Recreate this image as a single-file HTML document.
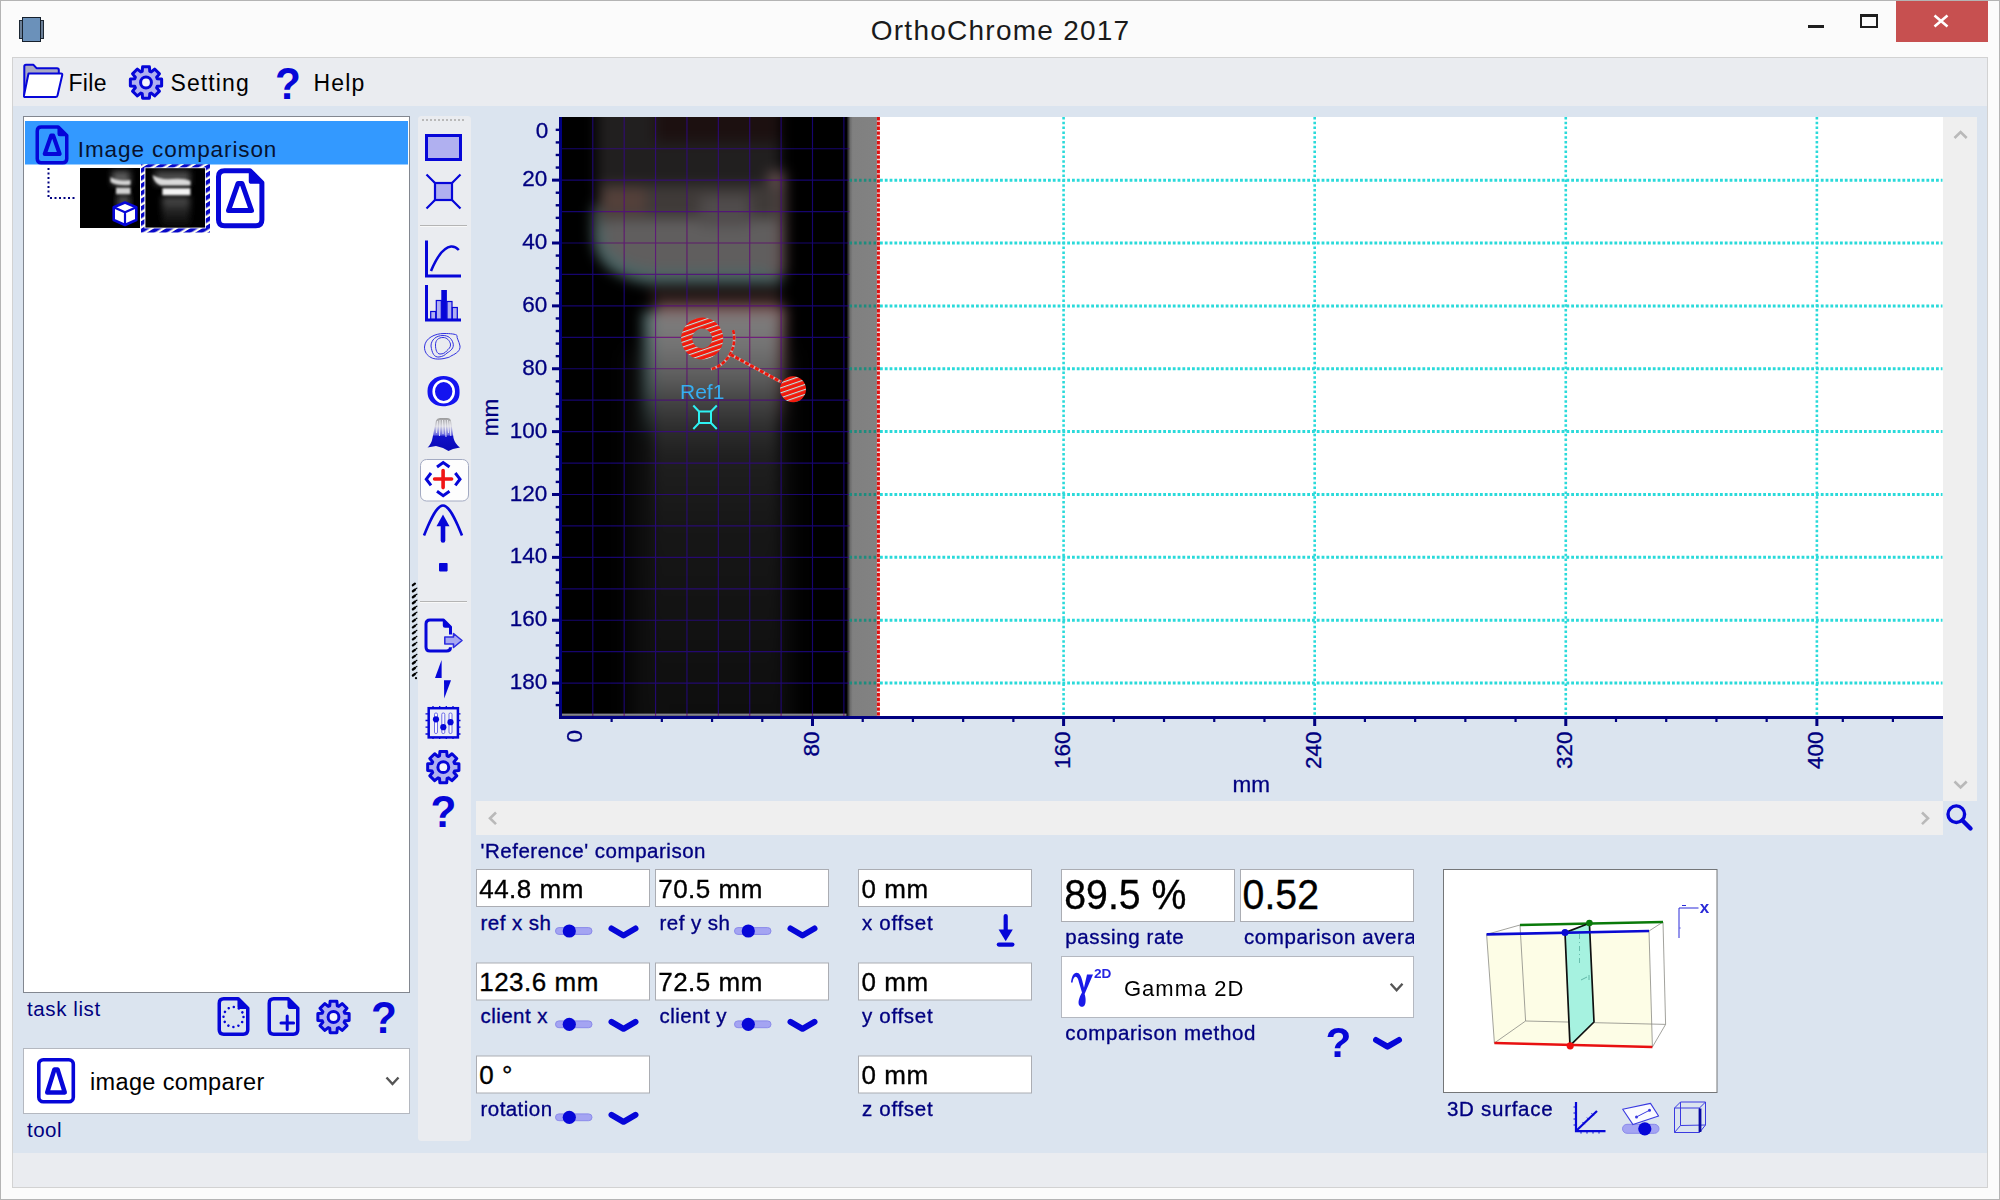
<!DOCTYPE html>
<html><head><meta charset="utf-8"><title>OrthoChrome 2017</title>
<style>
html,body{margin:0;padding:0;background:#fbfbfb;overflow:hidden;}
body{width:2000px;height:1200px;font-family:"Liberation Sans",sans-serif;}
svg{display:block;}
text{font-family:"Liberation Sans",sans-serif;}
</style></head>
<body>
<svg width="2000" height="1200" viewBox="0 0 2000 1200">
<rect x="0" y="0" width="2000" height="1200" fill="#fbfbfb"/>
<rect x="0.5" y="0.5" width="1999" height="1199" fill="none" stroke="#b4b4b4" stroke-width="1"/>
<rect x="19.5" y="20.5" width="24" height="18" fill="#6a7f98" stroke="#1c2733" stroke-width="1"/>
<rect x="22.5" y="17.5" width="18" height="24" fill="#6b91ba" stroke="#16202c" stroke-width="1"/>
<text x="1000.6" y="40.2" font-family="'Liberation Sans', sans-serif" font-size="28" fill="#1a1a1a" text-anchor="middle" letter-spacing="1.25">OrthoChrome 2017</text>
<rect x="1808" y="25" width="16" height="3" fill="#1e1e1e"/>
<rect x="1861" y="15" width="16" height="12" fill="none" stroke="#1e1e1e" stroke-width="2"/>
<rect x="1860" y="14" width="18" height="3" fill="#1e1e1e"/>
<rect x="1896" y="1" width="92" height="41" fill="#c75050"/>
<path d="M1934.5,15.5 L1947.5,26.5 M1947.5,15.5 L1934.5,26.5" stroke="#fff" stroke-width="2.6" fill="none"/>
<rect x="12.5" y="57.5" width="1975" height="1130" fill="#dbe4ef" stroke="#d2d2d2" stroke-width="1"/>
<rect x="13" y="58" width="1974" height="48" fill="#eaecf0"/>
<rect x="13" y="1153" width="1974" height="34" fill="#eaecf0"/>
<path d="M24.3,96 L24.3,66.5 Q24.3,64.8 26,64.8 L33.5,64.8 L36.5,68.2 L57,68.2 Q58.8,68.2 58.8,70 L58.8,74" fill="#a9a9c4" stroke="#0606d8" stroke-width="2" stroke-linejoin="round"/>
<path d="M28.5,73.5 L61,73.5 Q62.6,73.5 62.2,75.2 L57.5,95.5 Q57.1,97 55.5,97 L25.2,97 Q23.6,97 24,95.3 Z" fill="#fff" stroke="#0606d8" stroke-width="2" stroke-linejoin="round"/>
<text x="68.5" y="91.3" font-family="'Liberation Sans', sans-serif" font-size="23" fill="#000" letter-spacing="0.3">File</text>
<path d="M142.22,71.28 L142.59,66.87 L149.41,66.87 L149.78,71.28 L151.26,71.89 L154.64,69.03 L159.47,73.86 L156.61,77.24 L157.22,78.72 L161.63,79.09 L161.63,85.91 L157.22,86.28 L156.61,87.76 L159.47,91.14 L154.64,95.97 L151.26,93.11 L149.78,93.72 L149.41,98.13 L142.59,98.13 L142.22,93.72 L140.74,93.11 L137.36,95.97 L132.53,91.14 L135.39,87.76 L134.78,86.28 L130.37,85.91 L130.37,79.09 L134.78,78.72 L135.39,77.24 L132.53,73.86 L137.36,69.03 L140.74,71.89Z" fill="#b0b0f0" stroke="#0606d8" stroke-width="3" stroke-linejoin="round"/><circle cx="146" cy="82.5" r="5.42" fill="#f4f4fb" stroke="#0606d8" stroke-width="3"/>
<text x="170.5" y="91.3" font-family="'Liberation Sans', sans-serif" font-size="23" fill="#000" letter-spacing="1.1">Setting</text>
<text transform="translate(288,98.50) scale(0.944,1)" x="0" y="0" font-family="'Liberation Sans', sans-serif" font-weight="bold" font-size="44.79" fill="#0606d8" text-anchor="middle">?</text>
<text x="313.5" y="91.3" font-family="'Liberation Sans', sans-serif" font-size="23" fill="#000" letter-spacing="1.2">Help</text>
<rect x="23.5" y="116.5" width="386" height="876" fill="#fff" stroke="#828790" stroke-width="1"/>
<rect x="25" y="121" width="383" height="43.5" fill="#3399ff"/>
<path d="M41.25,127.05 L58.25,127.05 L66.75,135.55 L66.75,158.75 Q66.75,162.75 62.75,162.75 L41.25,162.75 Q37.25,162.75 37.25,158.75 L37.25,131.05 Q37.25,127.05 41.25,127.05Z" fill="none" stroke="#0606d8" stroke-width="3.5" stroke-linejoin="round"/><path d="M58.25,127.05 L58.25,134.05 Q58.25,135.55 59.75,135.55 L66.75,135.55Z" fill="#0606d8" stroke="#0606d8" stroke-width="1.57" stroke-linejoin="round"/>
<path d="M51.2,135.5 L53.2,135.5 L59.7,154 L44.7,154Z" fill="none" stroke="#0606d8" stroke-width="4" stroke-linejoin="round"/>
<text x="77.8" y="156.8" font-family="'Liberation Sans', sans-serif" font-size="22.5" fill="#061230" letter-spacing="0.9">Image comparison</text>
<path d="M48.5,168 L48.5,198 L77,198" fill="none" stroke="#000080" stroke-width="2" stroke-dasharray="2 2.5"/>
<defs><filter id="tb1" x="-30%" y="-30%" width="160%" height="160%"><feGaussianBlur stdDeviation="1.2"/></filter><filter id="tb2" x="-30%" y="-30%" width="160%" height="160%"><feGaussianBlur stdDeviation="3.2"/></filter><clipPath id="th1"><rect x="80" y="168" width="60" height="60"/></clipPath><clipPath id="th2"><rect x="145" y="168" width="60" height="60"/></clipPath><linearGradient id="fadeD" x1="0" y1="0" x2="0" y2="1"><stop offset="0" stop-color="#8a8a8a"/><stop offset="0.45" stop-color="#3a3a3a"/><stop offset="1" stop-color="#0a0a0a"/></linearGradient><pattern id="hatch" width="6.4" height="6.4" patternUnits="userSpaceOnUse" patternTransform="rotate(58)"><rect width="6.4" height="6.4" fill="#fffff0"/><rect width="4.1" height="6.4" fill="#0808c8"/></pattern></defs>
<rect x="80" y="168" width="60" height="60" fill="#000"/>
<g clip-path="url(#th1)"><rect x="112" y="171" width="18" height="14" fill="#5a5a5a" filter="url(#tb2)"/><rect x="117" y="195" width="13" height="16" fill="#4a4a4a" filter="url(#tb2)"/><path d="M110.5,177 Q117,181.5 130.5,180 L130.5,185 Q117,186 110.5,182Z" fill="#d4d4d4" filter="url(#tb1)"/><rect x="116" y="187.6" width="14.5" height="6.6" fill="#d0d0d0" filter="url(#tb1)"/></g>
<path d="M125,202.5 L136.3,207.3 L136.3,220 L125,225 L113.7,220 L113.7,207.3Z" fill="#fff" stroke="#0606d8" stroke-width="2.6" stroke-linejoin="round"/>
<path d="M113.7,207.3 L125,212.3 L136.3,207.3 M125,212.3 L125,225" fill="none" stroke="#0606d8" stroke-width="2.2"/>
<rect x="141" y="164.3" width="69" height="68.2" fill="url(#hatch)"/>
<rect x="144.4" y="167.4" width="61.4" height="61" fill="#fff"/>
<rect x="145.4" y="168.2" width="59.6" height="59.4" fill="#000"/>
<g clip-path="url(#th2)"><rect x="155" y="171" width="35" height="14" fill="#4c4c4c" filter="url(#tb2)"/><rect x="162" y="197" width="28" height="30" fill="url(#fadeD)" opacity="0.6" filter="url(#tb2)"/><path d="M152.5,175 Q160,180 172,179 Q184,178 190.5,181 L190.5,185.6 L161,185.6 Q154,183 152.5,175Z" fill="#dadada" filter="url(#tb1)"/><rect x="162.4" y="188.2" width="28" height="7" fill="#f4f4f4" filter="url(#tb1)"/></g>
<path d="M224.5,170.7 L249.89999999999998,170.7 L261.9,182.7 L261.9,219.7 Q261.9,225.7 255.89999999999998,225.7 L224.5,225.7 Q218.5,225.7 218.5,219.7 L218.5,176.7 Q218.5,170.7 224.5,170.7Z" fill="#fff" stroke="#0606d8" stroke-width="5" stroke-linejoin="round"/><path d="M249.89999999999998,170.7 L249.89999999999998,181.2 Q249.89999999999998,182.7 251.39999999999998,182.7 L261.9,182.7Z" fill="#0606d8" stroke="#0606d8" stroke-width="2.25" stroke-linejoin="round"/>
<path d="M238,183.5 L242,183.5 L251.5,210.5 L228.5,210.5Z" fill="none" stroke="#0606d8" stroke-width="5" stroke-linejoin="round"/>
<text x="27" y="1015.6" font-family="'Liberation Sans', sans-serif" font-size="20.5" fill="#000080" letter-spacing="0.6">task list</text>
<path d="M223.75,998.75 L238.25,998.75 L247.75,1008.25 L247.75,1029.75 Q247.75,1034.25 243.25,1034.25 L223.75,1034.25 Q219.25,1034.25 219.25,1029.75 L219.25,1003.25 Q219.25,998.75 223.75,998.75Z" fill="none" stroke="#0606d8" stroke-width="3.5" stroke-linejoin="round"/><path d="M238.25,998.75 L238.25,1006.75 Q238.25,1008.25 239.75,1008.25 L247.75,1008.25Z" fill="#0606d8" stroke="#0606d8" stroke-width="1.57" stroke-linejoin="round"/>
<circle cx="233.5" cy="1017" r="10" fill="none" stroke="#0606d8" stroke-width="2.5" stroke-dasharray="0.01 5.226" stroke-linecap="round"/>
<path d="M273.75,998.75 L288.25,998.75 L297.75,1008.25 L297.75,1029.75 Q297.75,1034.25 293.25,1034.25 L273.75,1034.25 Q269.25,1034.25 269.25,1029.75 L269.25,1003.25 Q269.25,998.75 273.75,998.75Z" fill="none" stroke="#0606d8" stroke-width="3.5" stroke-linejoin="round"/><path d="M288.25,998.75 L288.25,1006.75 Q288.25,1008.25 289.75,1008.25 L297.75,1008.25Z" fill="#0606d8" stroke="#0606d8" stroke-width="1.57" stroke-linejoin="round"/>
<path d="M281,1023 L293.6,1023 M287.2,1016 L287.2,1029.6" stroke="#0606d8" stroke-width="3" fill="none" stroke-linecap="round"/>
<path d="M329.72,1005.78 L330.09,1001.37 L336.91,1001.37 L337.28,1005.78 L338.76,1006.39 L342.14,1003.53 L346.97,1008.36 L344.11,1011.74 L344.72,1013.22 L349.13,1013.59 L349.13,1020.41 L344.72,1020.78 L344.11,1022.26 L346.97,1025.64 L342.14,1030.47 L338.76,1027.61 L337.28,1028.22 L336.91,1032.63 L330.09,1032.63 L329.72,1028.22 L328.24,1027.61 L324.86,1030.47 L320.03,1025.64 L322.89,1022.26 L322.28,1020.78 L317.87,1020.41 L317.87,1013.59 L322.28,1013.22 L322.89,1011.74 L320.03,1008.36 L324.86,1003.53 L328.24,1006.39Z" fill="#b0b0f0" stroke="#0606d8" stroke-width="3" stroke-linejoin="round"/><circle cx="333.5" cy="1017" r="5.42" fill="#f4f4fb" stroke="#0606d8" stroke-width="3"/>
<text transform="translate(384,1032.50) scale(0.944,1)" x="0" y="0" font-family="'Liberation Sans', sans-serif" font-weight="bold" font-size="44.79" fill="#0606d8" text-anchor="middle">?</text>
<rect x="23.5" y="1048.5" width="386" height="65" fill="#fff" stroke="#b4b8c0" stroke-width="1"/>
<rect x="38.8" y="1059.8" width="34.5" height="42" rx="4.5" fill="#fff" stroke="#0606d8" stroke-width="3.6"/>
<path d="M54.4,1069.5 L57.6,1069.5 L64.8,1092.5 L47.2,1092.5Z" fill="none" stroke="#0606d8" stroke-width="4.4" stroke-linejoin="round"/>
<text x="90" y="1090" font-family="'Liberation Sans', sans-serif" font-size="23.5" fill="#000" letter-spacing="0.35">image comparer</text>
<path d="M387,1106 m0,0" />
<path d="M386.5,1077.5 L392.5,1084 L398.5,1077.5" fill="none" stroke="#555" stroke-width="2.4"/>
<text x="27" y="1137" font-family="'Liberation Sans', sans-serif" font-size="20.5" fill="#000080" letter-spacing="0.5">tool</text>
<rect x="418" y="116" width="53" height="1025" rx="3.5" fill="#eaecf0"/>
<path d="M422,120 L465,120" stroke="#b9b9b9" stroke-width="2" stroke-dasharray="2 2" fill="none"/>
<rect x="426.5" y="135.5" width="34" height="24" fill="#b0b0f0" stroke="#0606d8" stroke-width="3"/>
<path d="M426.5,174.5 L435,183 M460.5,174.5 L452,183 M426.5,208.5 L435,200 M460.5,208.5 L452,200" stroke="#0606d8" stroke-width="2.2" fill="none"/>
<rect x="435" y="183" width="17" height="17" fill="#b0b0f0" stroke="#0606d8" stroke-width="2.2"/>
<path d="M420,225.5 L467,225.5" stroke="#b4b4b4" stroke-width="1"/>
<path d="M420,226.5 L467,226.5" stroke="#f8f8f8" stroke-width="1"/>
<path d="M426.5,240.5 L426.5,276 L461,276" fill="none" stroke="#0606d8" stroke-width="3"/>
<path d="M431,271 C436,259 443,247.5 451,246.5 C454.5,246.2 457,248 458.8,250" fill="none" stroke="#0606d8" stroke-width="2.5"/>
<rect x="430.7" y="311.5" width="5" height="8" fill="#b0b0f0" stroke="#0606d8" stroke-width="1.2"/>
<rect x="436.3" y="300.5" width="5" height="19" fill="#b0b0f0" stroke="#0606d8" stroke-width="1.2"/>
<rect x="441.3" y="290" width="5.6" height="30" fill="#0606d8"/>
<rect x="447" y="301.5" width="5" height="18" fill="#b0b0f0" stroke="#0606d8" stroke-width="1.2"/>
<rect x="452.3" y="307.5" width="5" height="12" fill="#b0b0f0" stroke="#0606d8" stroke-width="1.2"/>
<path d="M426.5,285 L426.5,320 L461,320" fill="none" stroke="#0606d8" stroke-width="3"/>
<path d="M424.5,347 C425,338 435,333.5 444,333.5 C450,333.5 456,334 457,335.5 C456.5,338 459,341 460,346 C460.5,351 456,353.5 452,355.5 C450,356.5 449.5,357.5 446,358 C441,359.5 434,359.5 431,357.5 C427,355.5 424.5,352 424.5,347Z" fill="none" stroke="#3030e0" stroke-width="1"/>
<path d="M431,346 C431,340 436,335.5 443,335.5 C448,335.5 451.5,338 453,343 C454.5,348 450.5,351 447,353 C445,355 443,356.5 439,357 C434,357.5 432,353 431,346Z" fill="none" stroke="#3030e0" stroke-width="1"/>
<path d="M435.5,345 C435.5,340 438.5,337.5 443,337.5 C447,337.5 449.5,340.5 450.5,344 C451,347.5 448.5,349 446.5,351 C445,353 443,354 440,354 C437,354 435.5,350 435.5,345Z" fill="none" stroke="#3030e0" stroke-width="1"/>
<path d="M427.5,391 C427.5,382 435,376 443.5,376 C452,376 459.5,381 459.5,390 C460,398 458,402 452,404.5 C446,407 438,407 433.5,403.5 C429,400 427.5,397 427.5,391Z" fill="#1414f0"/>
<ellipse cx="443.7" cy="391.5" rx="10" ry="10.8" fill="none" stroke="#fff" stroke-width="2.6"/>
<defs><linearGradient id="pk" x1="0" y1="0" x2="0" y2="1"><stop offset="0" stop-color="#9a9a9a"/><stop offset="0.25" stop-color="#d8d8e0"/><stop offset="0.5" stop-color="#6a6ae0"/><stop offset="0.56" stop-color="#1010c8"/><stop offset="1" stop-color="#0a0ab4"/></linearGradient></defs>
<path d="M436,420.5 Q437,418 440,418 L447,418 Q450.5,418 451,421 L453.5,438 Q455,444 460,447.5 L453,449 L448.5,451 L443,448 L436,446 L427.5,447.5 Q431.5,444 432.5,438 Z" fill="url(#pk)"/>
<path d="M437.5,421 L436.5,433 M440,420 L439.5,436 M442.5,420 L443,434 M445,420 L446,437 M447.5,420 L448.5,433 M449.8,421 L450.8,436" stroke="#f4f4f8" stroke-width="1" fill="none" opacity="0.85"/>
<rect x="420.5" y="459.5" width="48" height="41.5" rx="6" fill="#fdfdfd" stroke="#a3aac2" stroke-width="1"/>
<path d="M434.6,479 L451.6,479 M443.1,470.6 L443.1,487.6" stroke="#f01414" stroke-width="3.6" stroke-linecap="round" fill="none"/>
<path d="M437,467 L443.2,462.6 L449.5,467 M437,491.3 L443.2,495.7 L449.5,491.3 M431,473 L426.3,479.2 L431,485.4 M455.3,473 L460,479.2 L455.3,485.4" stroke="#0606d8" stroke-width="3" fill="none" stroke-linejoin="miter"/>
<path d="M424,535.5 C431,518 437,505.5 443,505.5 C449,505.5 455,518 462,535.5" fill="none" stroke="#0606d8" stroke-width="2.6"/>
<path d="M443,514.5 L449.5,526.3 L436.5,526.3Z" fill="#0606d8"/>
<path d="M443,524 L443,540.5" stroke="#0606d8" stroke-width="4.6" stroke-linecap="round"/>
<rect x="439" y="563" width="8.6" height="8.4" rx="0.8" fill="#0606d8"/>
<path d="M420,601.5 L467,601.5" stroke="#b4b4b4" stroke-width="1"/>
<path d="M420,602.5 L467,602.5" stroke="#f8f8f8" stroke-width="1"/>
<path d="M450.5,634.5 L450.5,627 L443.5,620 L430,620 Q426,620 426,624 L426,647 Q426,651 430,651 L446.5,651 Q450.5,651 450.5,647.2" fill="none" stroke="#0606d8" stroke-width="3" stroke-linejoin="round"/>
<path d="M443.5,620 L443.5,625.5 Q443.5,627 445,627 L450.5,627Z" fill="#0606d8" stroke="#0606d8" stroke-width="1.4" stroke-linejoin="round"/>
<path d="M444.8,637 L453.5,637 L453.5,633.5 L462,640.5 L453.5,647.5 L453.5,644 L444.8,644Z" fill="#a8a8f0" stroke="#2c2ce0" stroke-width="1.6" stroke-linejoin="round"/>
<path d="M441.6,660 L441.6,678 L435,678Z" fill="#0606d8"/>
<path d="M444,680.2 L451,680.2 L444.2,698.5Z" fill="#0606d8"/>
<path d="M433,705 v33 M439.7,705 v33 M446.3,705 v33 M453,705 v33 M425.5,712.8 h35 M425.5,719.5 h35 M425.5,726.2 h35 M425.5,733 h35" stroke="#0606d8" stroke-width="1.3" fill="none" transform="translate(0,1)"/>
<rect x="428.7" y="708.2" width="29.2" height="29.2" fill="#eceef6" stroke="#0606d8" stroke-width="2.5"/>
<rect x="434.5" y="713" width="3" height="20.5" rx="1.3" fill="#f8f8ff" stroke="#4a4ae0" stroke-width="0.8"/>
<rect x="441.8" y="713" width="3" height="20.5" rx="1.3" fill="#f8f8ff" stroke="#4a4ae0" stroke-width="0.8"/>
<rect x="449.0" y="713" width="3" height="20.5" rx="1.3" fill="#f8f8ff" stroke="#4a4ae0" stroke-width="0.8"/>
<circle cx="436" cy="719.3" r="3.1" fill="#0606d8"/><circle cx="443.3" cy="727.2" r="3.1" fill="#0606d8"/><circle cx="450.5" cy="722.2" r="3.1" fill="#0606d8"/>
<path d="M439.52,755.98 L439.89,751.57 L446.71,751.57 L447.08,755.98 L448.56,756.59 L451.94,753.73 L456.77,758.56 L453.91,761.94 L454.52,763.42 L458.93,763.79 L458.93,770.61 L454.52,770.98 L453.91,772.46 L456.77,775.84 L451.94,780.67 L448.56,777.81 L447.08,778.42 L446.71,782.83 L439.89,782.83 L439.52,778.42 L438.04,777.81 L434.66,780.67 L429.83,775.84 L432.69,772.46 L432.08,770.98 L427.67,770.61 L427.67,763.79 L432.08,763.42 L432.69,761.94 L429.83,758.56 L434.66,753.73 L438.04,756.59Z" fill="#b0b0f0" stroke="#0606d8" stroke-width="3" stroke-linejoin="round"/><circle cx="443.3" cy="767.2" r="5.42" fill="#f4f4fb" stroke="#0606d8" stroke-width="3"/>
<text transform="translate(443.5,827.00) scale(0.944,1)" x="0" y="0" font-family="'Liberation Sans', sans-serif" font-weight="bold" font-size="44.79" fill="#0606d8" text-anchor="middle">?</text>
<path d="M412.9,585.20 L414.9,583.70" stroke="#000" stroke-width="2.3" stroke-linecap="round"/><path d="M412.9,591.22 L414.9,589.72" stroke="#000" stroke-width="2.3" stroke-linecap="round"/><path d="M415.6,589.02 L416.9,588.12" stroke="#000" stroke-width="1.2" stroke-linecap="round"/><path d="M412.9,597.24 L414.9,595.74" stroke="#000" stroke-width="2.3" stroke-linecap="round"/><path d="M415.6,595.04 L416.9,594.14" stroke="#000" stroke-width="1.2" stroke-linecap="round"/><path d="M412.9,603.26 L414.9,601.76" stroke="#000" stroke-width="2.3" stroke-linecap="round"/><path d="M415.6,601.06 L416.9,600.16" stroke="#000" stroke-width="1.2" stroke-linecap="round"/><path d="M412.9,609.28 L414.9,607.78" stroke="#000" stroke-width="2.3" stroke-linecap="round"/><path d="M415.6,607.08 L416.9,606.18" stroke="#000" stroke-width="1.2" stroke-linecap="round"/><path d="M412.9,615.30 L414.9,613.80" stroke="#000" stroke-width="2.3" stroke-linecap="round"/><path d="M415.6,613.10 L416.9,612.20" stroke="#000" stroke-width="1.2" stroke-linecap="round"/><path d="M412.9,621.32 L414.9,619.82" stroke="#000" stroke-width="2.3" stroke-linecap="round"/><path d="M415.6,619.12 L416.9,618.22" stroke="#000" stroke-width="1.2" stroke-linecap="round"/><path d="M412.9,627.34 L414.9,625.84" stroke="#000" stroke-width="2.3" stroke-linecap="round"/><path d="M415.6,625.14 L416.9,624.24" stroke="#000" stroke-width="1.2" stroke-linecap="round"/><path d="M412.9,633.36 L414.9,631.86" stroke="#000" stroke-width="2.3" stroke-linecap="round"/><path d="M415.6,631.16 L416.9,630.26" stroke="#000" stroke-width="1.2" stroke-linecap="round"/><path d="M412.9,639.38 L414.9,637.88" stroke="#000" stroke-width="2.3" stroke-linecap="round"/><path d="M415.6,637.18 L416.9,636.28" stroke="#000" stroke-width="1.2" stroke-linecap="round"/><path d="M412.9,645.40 L414.9,643.90" stroke="#000" stroke-width="2.3" stroke-linecap="round"/><path d="M415.6,643.20 L416.9,642.30" stroke="#000" stroke-width="1.2" stroke-linecap="round"/><path d="M412.9,651.42 L414.9,649.92" stroke="#000" stroke-width="2.3" stroke-linecap="round"/><path d="M415.6,649.22 L416.9,648.32" stroke="#000" stroke-width="1.2" stroke-linecap="round"/><path d="M412.9,657.44 L414.9,655.94" stroke="#000" stroke-width="2.3" stroke-linecap="round"/><path d="M415.6,655.24 L416.9,654.34" stroke="#000" stroke-width="1.2" stroke-linecap="round"/><path d="M412.9,663.46 L414.9,661.96" stroke="#000" stroke-width="2.3" stroke-linecap="round"/><path d="M415.6,661.26 L416.9,660.36" stroke="#000" stroke-width="1.2" stroke-linecap="round"/><path d="M412.9,669.48 L414.9,667.98" stroke="#000" stroke-width="2.3" stroke-linecap="round"/><path d="M415.6,667.28 L416.9,666.38" stroke="#000" stroke-width="1.2" stroke-linecap="round"/><path d="M412.9,675.50 L414.9,674.00" stroke="#000" stroke-width="2.3" stroke-linecap="round"/><path d="M415.6,673.30 L416.9,672.40" stroke="#000" stroke-width="1.2" stroke-linecap="round"/><circle cx="416" cy="678.2" r="1.1" fill="#000"/>
<rect x="559" y="117" width="1384" height="600" fill="#fff"/>
<defs>
<clipPath id="imgc"><rect x="561" y="117" width="287.5" height="599.5"/></clipPath>
<filter id="bA" filterUnits="userSpaceOnUse" x="520" y="60" width="400" height="760" color-interpolation-filters="sRGB"><feGaussianBlur stdDeviation="6.5"/></filter>
<filter id="bB" filterUnits="userSpaceOnUse" x="520" y="60" width="400" height="900" color-interpolation-filters="sRGB"><feGaussianBlur stdDeviation="9"/></filter>
<linearGradient id="lowfade" gradientUnits="userSpaceOnUse" x1="0" y1="311" x2="0" y2="741">
 <stop offset="0" stop-color="#807e7e"/><stop offset="0.08" stop-color="#747474"/><stop offset="0.15" stop-color="#5e5e5e"/>
 <stop offset="0.21" stop-color="#444444"/><stop offset="0.27" stop-color="#2e2e2e"/><stop offset="0.34" stop-color="#1f1f1f"/><stop offset="0.5" stop-color="#171717"/><stop offset="1" stop-color="#0d0d0d"/>
</linearGradient>
<linearGradient id="fr1" gradientUnits="userSpaceOnUse" x1="0" y1="311" x2="0" y2="440">
 <stop offset="0" stop-color="#567272"/><stop offset="0.6" stop-color="#3c5050"/><stop offset="1" stop-color="#0c0f0f"/>
</linearGradient>
<linearGradient id="fr2" gradientUnits="userSpaceOnUse" x1="0" y1="311" x2="0" y2="425">
 <stop offset="0" stop-color="#745252"/><stop offset="0.6" stop-color="#4a3434"/><stop offset="1" stop-color="#0f0c0c"/>
</linearGradient>
</defs>
<rect x="561" y="117" width="288" height="600" fill="#000"/>
<g clip-path="url(#imgc)"><g filter="url(#bA)"><rect x="597" y="90" width="184" height="98" fill="#211f1f"/><rect x="655" y="90" width="126" height="52" fill="#1c1010"/><path d="M593,206 L660,206 L660,262 L781,262 L781,284 L650,284 Q596,276 593,238Z" fill="#4c6666"/><rect x="768" y="172" width="17" height="102" fill="#665050"/><rect x="599" y="185" width="180" height="40" fill="#3f3a38"/><rect x="602" y="187" width="44" height="26" fill="#54403a"/><path d="M603,219 L777,219 L777,271 L662,271 Q606,266 603,234Z" fill="#605e5e"/><rect x="700" y="196" width="50" height="30" fill="#504c4c"/><rect x="650" y="289" width="131" height="13" fill="#2b1c1a"/><rect x="630" y="350" width="160" height="560" fill="#0f0f0f" filter="url(#bB)"/><rect x="643" y="311" width="18" height="130" fill="url(#fr1)"/><rect x="769" y="306" width="17" height="120" fill="url(#fr2)"/><rect x="653" y="311" width="125" height="580" fill="url(#lowfade)"/><rect x="656" y="304" width="122" height="9" fill="#805858"/></g></g>
<rect x="562" y="713.6" width="286" height="2.2" fill="#84848e"/>
<defs><linearGradient id="gb" x1="0" y1="0" x2="1" y2="0"><stop offset="0" stop-color="#000"/><stop offset="0.12" stop-color="#6c6c6c"/><stop offset="0.2" stop-color="#808080"/><stop offset="1" stop-color="#828282"/></linearGradient></defs>
<rect x="846.5" y="117" width="31" height="599.5" fill="url(#gb)"/>
<path d="M562,148.70 L849.5,148.70 M562,180.13 L849.5,180.13 M562,211.57 L849.5,211.57 M562,243.00 L849.5,243.00 M562,274.44 L849.5,274.44 M562,305.88 L849.5,305.88 M562,337.31 L849.5,337.31 M562,368.75 L849.5,368.75 M562,400.18 L849.5,400.18 M562,431.62 L849.5,431.62 M562,463.06 L849.5,463.06 M562,494.49 L849.5,494.49 M562,525.93 L849.5,525.93 M562,557.36 L849.5,557.36 M562,588.80 L849.5,588.80 M562,620.24 L849.5,620.24 M562,651.67 L849.5,651.67 M562,683.11 L849.5,683.11 M592.79,117 L592.79,716 M624.17,117 L624.17,716 M655.56,117 L655.56,716 M686.95,117 L686.95,716 M718.34,117 L718.34,716 M749.72,117 L749.72,716 M781.11,117 L781.11,716 M812.50,117 L812.50,716 M843.88,117 L843.88,716" stroke="#d03c34" stroke-width="1.15" fill="none" style="mix-blend-mode:multiply"/>
<path d="M562,148.70 L849.5,148.70 M562,180.13 L849.5,180.13 M562,211.57 L849.5,211.57 M562,243.00 L849.5,243.00 M562,274.44 L849.5,274.44 M562,305.88 L849.5,305.88 M562,337.31 L849.5,337.31 M562,368.75 L849.5,368.75 M562,400.18 L849.5,400.18 M562,431.62 L849.5,431.62 M562,463.06 L849.5,463.06 M562,494.49 L849.5,494.49 M562,525.93 L849.5,525.93 M562,557.36 L849.5,557.36 M562,588.80 L849.5,588.80 M562,620.24 L849.5,620.24 M562,651.67 L849.5,651.67 M562,683.11 L849.5,683.11 M592.79,117 L592.79,716 M624.17,117 L624.17,716 M655.56,117 L655.56,716 M686.95,117 L686.95,716 M718.34,117 L718.34,716 M749.72,117 L749.72,716 M781.11,117 L781.11,716 M812.50,117 L812.50,716 M843.88,117 L843.88,716" stroke="#16046e" stroke-width="1.15" fill="none" style="mix-blend-mode:screen"/>
<path d="M880,180.13 L1942.5,180.13 M880,243.00 L1942.5,243.00 M880,305.88 L1942.5,305.88 M880,368.75 L1942.5,368.75 M880,431.62 L1942.5,431.62 M880,494.49 L1942.5,494.49 M880,557.36 L1942.5,557.36 M880,620.24 L1942.5,620.24 M880,683.11 L1942.5,683.11" stroke="#2adada" stroke-width="3" stroke-dasharray="2.8 2.0" fill="none"/>
<path d="M849.5,180.13 L877,180.13 M849.5,243.00 L877,243.00 M849.5,305.88 L877,305.88 M849.5,368.75 L877,368.75 M849.5,431.62 L877,431.62 M849.5,494.49 L877,494.49 M849.5,557.36 L877,557.36 M849.5,620.24 L877,620.24 M849.5,683.11 L877,683.11" stroke="#1e8c7e" stroke-width="3" stroke-dasharray="2.5 2.3" fill="none"/>
<path d="M1063.59,117 L1063.59,716 M1314.69,117 L1314.69,716 M1565.78,117 L1565.78,716 M1816.88,117 L1816.88,716" stroke="#2adada" stroke-width="2.6" stroke-dasharray="2.5 2.3" fill="none"/>
<path d="M878.4,117 L878.4,716" stroke="#f6dada" stroke-width="3"/>
<path d="M878.4,117 L878.4,716" stroke="#e01010" stroke-width="3" stroke-dasharray="3.4 1.4"/>
<defs><pattern id="rh" width="8" height="4.7" patternUnits="userSpaceOnUse" patternTransform="rotate(-19)"><rect width="8" height="4.7" fill="#f21a0c"/><rect y="0" width="8" height="1.1" fill="#b8e6e2"/></pattern></defs>
<path d="M702.2,317.5 a21,21 0 1,0 0.01,0Z M702.2,328.6 a9.9,9.9 0 1,1 -0.01,0Z" fill="url(#rh)" fill-rule="evenodd"/>
<circle cx="793" cy="389.3" r="13" fill="url(#rh)"/>
<path d="M733.1,330.2 A32,32 0 0,1 711.0,369.3" fill="none" stroke="#c8b0b0" stroke-width="2.6"/>
<path d="M733.1,330.2 A32,32 0 0,1 711.0,369.3" fill="none" stroke="#e8180c" stroke-width="2.6" stroke-dasharray="4 1.6"/>
<path d="M730.5,354.5 L781,382" fill="none" stroke="#c8b0b0" stroke-width="3"/>
<path d="M730.5,354.5 L781,382" fill="none" stroke="#e8180c" stroke-width="3" stroke-dasharray="4 1.6"/>
<text x="680" y="398.6" font-family="'Liberation Sans', sans-serif" font-size="21" fill="#36aef2">Ref1</text>
<path d="M693.3,405.5 L699,411.5 M716.8,405.5 L711,411.5 M693.3,429 L699,423 M716.8,429 L711,423" stroke="#2ef2f2" stroke-width="2" fill="none"/>
<rect x="699" y="411.5" width="12" height="11.5" fill="none" stroke="#2ef2f2" stroke-width="2"/>
<rect x="559" y="117" width="3" height="602" fill="#000080"/>
<rect x="559" y="716" width="1384" height="3" fill="#000080"/>
<rect x="555.7" y="128.63" width="4" height="2.4" fill="#000080"/><rect x="555.7" y="141.21" width="4" height="2.4" fill="#000080"/><rect x="555.7" y="153.78" width="4" height="2.4" fill="#000080"/><rect x="555.7" y="166.36" width="4" height="2.4" fill="#000080"/><rect x="552" y="178.63" width="8" height="3" fill="#000080"/><rect x="555.7" y="191.51" width="4" height="2.4" fill="#000080"/><rect x="555.7" y="204.08" width="4" height="2.4" fill="#000080"/><rect x="555.7" y="216.66" width="4" height="2.4" fill="#000080"/><rect x="555.7" y="229.23" width="4" height="2.4" fill="#000080"/><rect x="552" y="241.50" width="8" height="3" fill="#000080"/><rect x="555.7" y="254.38" width="4" height="2.4" fill="#000080"/><rect x="555.7" y="266.95" width="4" height="2.4" fill="#000080"/><rect x="555.7" y="279.53" width="4" height="2.4" fill="#000080"/><rect x="555.7" y="292.10" width="4" height="2.4" fill="#000080"/><rect x="552" y="304.38" width="8" height="3" fill="#000080"/><rect x="555.7" y="317.25" width="4" height="2.4" fill="#000080"/><rect x="555.7" y="329.82" width="4" height="2.4" fill="#000080"/><rect x="555.7" y="342.40" width="4" height="2.4" fill="#000080"/><rect x="555.7" y="354.97" width="4" height="2.4" fill="#000080"/><rect x="552" y="367.25" width="8" height="3" fill="#000080"/><rect x="555.7" y="380.12" width="4" height="2.4" fill="#000080"/><rect x="555.7" y="392.70" width="4" height="2.4" fill="#000080"/><rect x="555.7" y="405.27" width="4" height="2.4" fill="#000080"/><rect x="555.7" y="417.85" width="4" height="2.4" fill="#000080"/><rect x="552" y="430.12" width="8" height="3" fill="#000080"/><rect x="555.7" y="442.99" width="4" height="2.4" fill="#000080"/><rect x="555.7" y="455.57" width="4" height="2.4" fill="#000080"/><rect x="555.7" y="468.14" width="4" height="2.4" fill="#000080"/><rect x="555.7" y="480.72" width="4" height="2.4" fill="#000080"/><rect x="552" y="492.99" width="8" height="3" fill="#000080"/><rect x="555.7" y="505.87" width="4" height="2.4" fill="#000080"/><rect x="555.7" y="518.44" width="4" height="2.4" fill="#000080"/><rect x="555.7" y="531.02" width="4" height="2.4" fill="#000080"/><rect x="555.7" y="543.59" width="4" height="2.4" fill="#000080"/><rect x="552" y="555.86" width="8" height="3" fill="#000080"/><rect x="555.7" y="568.74" width="4" height="2.4" fill="#000080"/><rect x="555.7" y="581.31" width="4" height="2.4" fill="#000080"/><rect x="555.7" y="593.89" width="4" height="2.4" fill="#000080"/><rect x="555.7" y="606.46" width="4" height="2.4" fill="#000080"/><rect x="552" y="618.74" width="8" height="3" fill="#000080"/><rect x="555.7" y="631.61" width="4" height="2.4" fill="#000080"/><rect x="555.7" y="644.18" width="4" height="2.4" fill="#000080"/><rect x="555.7" y="656.76" width="4" height="2.4" fill="#000080"/><rect x="555.7" y="669.33" width="4" height="2.4" fill="#000080"/><rect x="552" y="681.61" width="8" height="3" fill="#000080"/><rect x="555.7" y="691.60" width="4" height="2.4" fill="#000080"/><rect x="555.7" y="703.90" width="4" height="2.4" fill="#000080"/><rect x="610.52" y="718" width="2.2" height="4" fill="#000080"/><rect x="660.74" y="718" width="2.2" height="4" fill="#000080"/><rect x="710.96" y="718" width="2.2" height="4" fill="#000080"/><rect x="761.18" y="718" width="2.2" height="4" fill="#000080"/><rect x="811.00" y="718" width="3" height="8" fill="#000080"/><rect x="861.62" y="718" width="2.2" height="4" fill="#000080"/><rect x="911.83" y="718" width="2.2" height="4" fill="#000080"/><rect x="962.05" y="718" width="2.2" height="4" fill="#000080"/><rect x="1012.27" y="718" width="2.2" height="4" fill="#000080"/><rect x="1062.09" y="718" width="3" height="8" fill="#000080"/><rect x="1112.71" y="718" width="2.2" height="4" fill="#000080"/><rect x="1162.93" y="718" width="2.2" height="4" fill="#000080"/><rect x="1213.15" y="718" width="2.2" height="4" fill="#000080"/><rect x="1263.37" y="718" width="2.2" height="4" fill="#000080"/><rect x="1313.19" y="718" width="3" height="8" fill="#000080"/><rect x="1363.81" y="718" width="2.2" height="4" fill="#000080"/><rect x="1414.03" y="718" width="2.2" height="4" fill="#000080"/><rect x="1464.25" y="718" width="2.2" height="4" fill="#000080"/><rect x="1514.46" y="718" width="2.2" height="4" fill="#000080"/><rect x="1564.28" y="718" width="3" height="8" fill="#000080"/><rect x="1614.90" y="718" width="2.2" height="4" fill="#000080"/><rect x="1665.12" y="718" width="2.2" height="4" fill="#000080"/><rect x="1715.34" y="718" width="2.2" height="4" fill="#000080"/><rect x="1765.56" y="718" width="2.2" height="4" fill="#000080"/><rect x="1815.38" y="718" width="3" height="8" fill="#000080"/><rect x="1841.70" y="718" width="2.2" height="4" fill="#000080"/><rect x="1891.80" y="718" width="2.2" height="4" fill="#000080"/>
<text x="547.4" y="186.18" font-family="'Liberation Sans', sans-serif" font-size="22.5" fill="#000080" stroke="#000080" stroke-width="0.3" text-anchor="end">20</text>
<text x="547.4" y="249.05" font-family="'Liberation Sans', sans-serif" font-size="22.5" fill="#000080" stroke="#000080" stroke-width="0.3" text-anchor="end">40</text>
<text x="547.4" y="311.93" font-family="'Liberation Sans', sans-serif" font-size="22.5" fill="#000080" stroke="#000080" stroke-width="0.3" text-anchor="end">60</text>
<text x="547.4" y="374.80" font-family="'Liberation Sans', sans-serif" font-size="22.5" fill="#000080" stroke="#000080" stroke-width="0.3" text-anchor="end">80</text>
<text x="547.4" y="437.67" font-family="'Liberation Sans', sans-serif" font-size="22.5" fill="#000080" stroke="#000080" stroke-width="0.3" text-anchor="end">100</text>
<text x="547.4" y="500.54" font-family="'Liberation Sans', sans-serif" font-size="22.5" fill="#000080" stroke="#000080" stroke-width="0.3" text-anchor="end">120</text>
<text x="547.4" y="563.41" font-family="'Liberation Sans', sans-serif" font-size="22.5" fill="#000080" stroke="#000080" stroke-width="0.3" text-anchor="end">140</text>
<text x="547.4" y="626.29" font-family="'Liberation Sans', sans-serif" font-size="22.5" fill="#000080" stroke="#000080" stroke-width="0.3" text-anchor="end">160</text>
<text x="547.4" y="689.16" font-family="'Liberation Sans', sans-serif" font-size="22.5" fill="#000080" stroke="#000080" stroke-width="0.3" text-anchor="end">180</text>
<text x="548.2" y="138.1" font-family="'Liberation Sans', sans-serif" font-size="22.5" fill="#000080" stroke="#000080" stroke-width="0.3" text-anchor="end">0</text>
<text transform="translate(497.8,417.5) rotate(-90)" font-family="'Liberation Sans', sans-serif" font-size="22.5" fill="#000080" stroke="#000080" stroke-width="0.3" text-anchor="middle">mm</text>
<text transform="translate(818.60,731.5) rotate(-90)" font-family="'Liberation Sans', sans-serif" font-size="22.5" fill="#000080" stroke="#000080" stroke-width="0.3" text-anchor="end">80</text>
<text transform="translate(1069.69,731.5) rotate(-90)" font-family="'Liberation Sans', sans-serif" font-size="22.5" fill="#000080" stroke="#000080" stroke-width="0.3" text-anchor="end">160</text>
<text transform="translate(1320.79,731.5) rotate(-90)" font-family="'Liberation Sans', sans-serif" font-size="22.5" fill="#000080" stroke="#000080" stroke-width="0.3" text-anchor="end">240</text>
<text transform="translate(1571.88,731.5) rotate(-90)" font-family="'Liberation Sans', sans-serif" font-size="22.5" fill="#000080" stroke="#000080" stroke-width="0.3" text-anchor="end">320</text>
<text transform="translate(1822.98,731.5) rotate(-90)" font-family="'Liberation Sans', sans-serif" font-size="22.5" fill="#000080" stroke="#000080" stroke-width="0.3" text-anchor="end">400</text>
<text transform="translate(582,730) rotate(-90)" font-family="'Liberation Sans', sans-serif" font-size="22.5" fill="#000080" stroke="#000080" stroke-width="0.3" text-anchor="end">0</text>
<text x="1251.2" y="792" font-family="'Liberation Sans', sans-serif" font-size="22.5" fill="#000080" stroke="#000080" stroke-width="0.3" text-anchor="middle">mm</text>
<rect x="1943" y="117" width="34" height="684" fill="#efefef"/>
<path d="M1954.5,138 L1960.6,132 L1966.7,138" fill="none" stroke="#b9b9b9" stroke-width="2.6"/>
<path d="M1954.5,781.5 L1960.6,787.5 L1966.7,781.5" fill="none" stroke="#b9b9b9" stroke-width="2.6"/>
<rect x="476" y="801" width="1467" height="34" fill="#efefef"/>
<path d="M496,812.5 L490,818.3 L496,824.1" fill="none" stroke="#b9b9b9" stroke-width="2.6"/>
<path d="M1922,812.5 L1928,818.3 L1922,824.1" fill="none" stroke="#b9b9b9" stroke-width="2.6"/>
<circle cx="1956.3" cy="814.2" r="8.3" fill="none" stroke="#0606d8" stroke-width="3.4"/>
<path d="M1962.5,820.5 L1970.5,828.5" stroke="#0606d8" stroke-width="4.4" stroke-linecap="round"/>
<text x="480.5" y="857.5" font-family="'Liberation Sans', sans-serif" font-size="20.5" fill="#000080" stroke="#000080" stroke-width="0.35" letter-spacing="0.52" >'Reference' comparison</text>
<rect x="476.5" y="869.5" width="173" height="37" fill="#fff" stroke="#abadb3" stroke-width="1"/><text transform="translate(479.2,897.77) scale(1,1)" font-family="'Liberation Sans', sans-serif" font-size="26" fill="#000" stroke="#000" stroke-width="0.35" letter-spacing="0.5">44.8 mm</text>
<text x="480.5" y="929.5" font-family="'Liberation Sans', sans-serif" font-size="20.5" fill="#000080" stroke="#000080" stroke-width="0.35" letter-spacing="0.45" >ref x sh</text>
<rect x="555.5" y="927.6" width="36.5" height="6.8" rx="3.4" fill="#a4a4f2" stroke="#8a8aea" stroke-width="1"/><circle cx="569.3" cy="931.0" r="6.6" fill="#0606d8"/>
<path d="M611.5,928.5 L623.5,935.5 L635.5,928.5" fill="none" stroke="#0606d8" stroke-width="6.0" stroke-linecap="round" stroke-linejoin="round"/>
<rect x="476.5" y="963.0" width="173" height="37" fill="#fff" stroke="#abadb3" stroke-width="1"/><text transform="translate(479.2,991.27) scale(1,1)" font-family="'Liberation Sans', sans-serif" font-size="26" fill="#000" stroke="#000" stroke-width="0.35" letter-spacing="0.5">123.6 mm</text>
<text x="480.5" y="1022.8" font-family="'Liberation Sans', sans-serif" font-size="20.5" fill="#000080" stroke="#000080" stroke-width="0.35" letter-spacing="0.45" >client x</text>
<rect x="555.5" y="1020.9" width="36.5" height="6.8" rx="3.4" fill="#a4a4f2" stroke="#8a8aea" stroke-width="1"/><circle cx="569.3" cy="1024.3" r="6.6" fill="#0606d8"/>
<path d="M611.5,1021.8 L623.5,1028.8 L635.5,1021.8" fill="none" stroke="#0606d8" stroke-width="6.0" stroke-linecap="round" stroke-linejoin="round"/>
<rect x="476.5" y="1056.0" width="173" height="37" fill="#fff" stroke="#abadb3" stroke-width="1"/><text transform="translate(479.2,1084.27) scale(1,1)" font-family="'Liberation Sans', sans-serif" font-size="26" fill="#000" stroke="#000" stroke-width="0.35" letter-spacing="0.5">0 °</text>
<text x="480.5" y="1115.8" font-family="'Liberation Sans', sans-serif" font-size="20.5" fill="#000080" stroke="#000080" stroke-width="0.35" letter-spacing="0.45" >rotation</text>
<rect x="555.5" y="1113.8999999999999" width="36.5" height="6.8" rx="3.4" fill="#a4a4f2" stroke="#8a8aea" stroke-width="1"/><circle cx="569.3" cy="1117.3" r="6.6" fill="#0606d8"/>
<path d="M611.5,1114.8 L623.5,1121.8 L635.5,1114.8" fill="none" stroke="#0606d8" stroke-width="6.0" stroke-linecap="round" stroke-linejoin="round"/>
<rect x="655.5" y="869.5" width="173" height="37" fill="#fff" stroke="#abadb3" stroke-width="1"/><text transform="translate(658.2,897.77) scale(1,1)" font-family="'Liberation Sans', sans-serif" font-size="26" fill="#000" stroke="#000" stroke-width="0.35" letter-spacing="0.5">70.5 mm</text>
<text x="659.5" y="929.5" font-family="'Liberation Sans', sans-serif" font-size="20.5" fill="#000080" stroke="#000080" stroke-width="0.35" letter-spacing="0.45" >ref y sh</text>
<rect x="734.5" y="927.6" width="36.5" height="6.8" rx="3.4" fill="#a4a4f2" stroke="#8a8aea" stroke-width="1"/><circle cx="748.3" cy="931.0" r="6.6" fill="#0606d8"/>
<path d="M790.5,928.5 L802.5,935.5 L814.5,928.5" fill="none" stroke="#0606d8" stroke-width="6.0" stroke-linecap="round" stroke-linejoin="round"/>
<rect x="655.5" y="963.0" width="173" height="37" fill="#fff" stroke="#abadb3" stroke-width="1"/><text transform="translate(658.2,991.27) scale(1,1)" font-family="'Liberation Sans', sans-serif" font-size="26" fill="#000" stroke="#000" stroke-width="0.35" letter-spacing="0.5">72.5 mm</text>
<text x="659.5" y="1022.8" font-family="'Liberation Sans', sans-serif" font-size="20.5" fill="#000080" stroke="#000080" stroke-width="0.35" letter-spacing="0.45" >client y</text>
<rect x="734.5" y="1020.9" width="36.5" height="6.8" rx="3.4" fill="#a4a4f2" stroke="#8a8aea" stroke-width="1"/><circle cx="748.3" cy="1024.3" r="6.6" fill="#0606d8"/>
<path d="M790.5,1021.8 L802.5,1028.8 L814.5,1021.8" fill="none" stroke="#0606d8" stroke-width="6.0" stroke-linecap="round" stroke-linejoin="round"/>
<rect x="858.5" y="869.5" width="173" height="37" fill="#fff" stroke="#abadb3" stroke-width="1"/><text transform="translate(861.6,897.77) scale(1,1)" font-family="'Liberation Sans', sans-serif" font-size="26" fill="#000" stroke="#000" stroke-width="0.35" letter-spacing="0.5">0 mm</text>
<text x="862" y="929.5" font-family="'Liberation Sans', sans-serif" font-size="20.5" fill="#000080" stroke="#000080" stroke-width="0.35" letter-spacing="0.7" >x offset</text>
<rect x="858.5" y="963.0" width="173" height="37" fill="#fff" stroke="#abadb3" stroke-width="1"/><text transform="translate(861.6,991.27) scale(1,1)" font-family="'Liberation Sans', sans-serif" font-size="26" fill="#000" stroke="#000" stroke-width="0.35" letter-spacing="0.5">0 mm</text>
<text x="862" y="1022.8" font-family="'Liberation Sans', sans-serif" font-size="20.5" fill="#000080" stroke="#000080" stroke-width="0.35" letter-spacing="0.7" >y offset</text>
<rect x="858.5" y="1056.0" width="173" height="37" fill="#fff" stroke="#abadb3" stroke-width="1"/><text transform="translate(861.6,1084.27) scale(1,1)" font-family="'Liberation Sans', sans-serif" font-size="26" fill="#000" stroke="#000" stroke-width="0.35" letter-spacing="0.5">0 mm</text>
<text x="862" y="1115.8" font-family="'Liberation Sans', sans-serif" font-size="20.5" fill="#000080" stroke="#000080" stroke-width="0.35" letter-spacing="0.7" >z offset</text>
<path d="M1005.7,916 L1005.7,932" stroke="#0606d8" stroke-width="4.2" stroke-linecap="round"/>
<path d="M998.6,929.6 L1012.8,929.6 L1005.7,941.3Z" fill="#0606d8"/>
<path d="M998.8,944.6 L1012.4,944.6" stroke="#0606d8" stroke-width="4.2" stroke-linecap="round"/>
<rect x="1061.5" y="869.5" width="173" height="52" fill="#fff" stroke="#abadb3" stroke-width="1"/><text transform="translate(1064.3,909.00) scale(0.93,1)" font-family="'Liberation Sans', sans-serif" font-size="42.2" fill="#000" stroke="#000" stroke-width="0.35" letter-spacing="0">89.5 %</text>
<rect x="1240.5" y="869.5" width="173" height="52" fill="#fff" stroke="#abadb3" stroke-width="1"/><text transform="translate(1242.6,909.00) scale(0.93,1)" font-family="'Liberation Sans', sans-serif" font-size="42.2" fill="#000" stroke="#000" stroke-width="0.35" letter-spacing="0">0.52</text>
<text x="1065.3" y="944.4" font-family="'Liberation Sans', sans-serif" font-size="20.5" fill="#000080" stroke="#000080" stroke-width="0.35" letter-spacing="0.6" >passing rate</text>
<clipPath id="cavg"><rect x="1240" y="922" width="174" height="30"/></clipPath>
<text x="1244" y="944.4" font-family="'Liberation Sans', sans-serif" font-size="20.5" fill="#000080" stroke="#000080" stroke-width="0.35" letter-spacing="0.6" clip-path="url(#cavg)">comparison average</text>
<rect x="1061.5" y="956.5" width="352" height="61" fill="#fff" stroke="#b4b8c0" stroke-width="1"/>
<path d="M1071.0,982.6 C1071.6,976.5 1073.6,972.8 1076.6,972.8 C1079.6,972.8 1081.0,976.0 1082.2,980.5 L1084.0,987.8 L1087.0,974.4 L1093.0,974.4 L1084.6,994.0 C1086.0,998 1086.0,1003.5 1084.5,1005.5 C1083.2,1007.3 1080.6,1007.3 1079.4,1005.5 C1077.6,1003 1079.0,997.5 1082.0,992.5 L1079.0,982.5 C1078.2,979 1077.2,976.8 1075.8,976.8 C1074.0,976.8 1073.0,979.5 1072.6,982.6 Z" fill="#1a1ae8"/>
<text x="1094" y="977.6" font-family="'Liberation Sans', sans-serif" font-weight="bold" font-size="13.6" fill="#2424e2">2D</text>
<text x="1124" y="995.6" font-family="'Liberation Sans', sans-serif" font-size="22" fill="#000" letter-spacing="1.0">Gamma 2D</text>
<path d="M1390.7,983.8 L1396.6,990.2 L1402.5,983.8" fill="none" stroke="#555" stroke-width="2.4"/>
<text x="1065.3" y="1040.4" font-family="'Liberation Sans', sans-serif" font-size="20.5" fill="#000080" stroke="#000080" stroke-width="0.35" letter-spacing="0.63" >comparison method</text>
<text transform="translate(1338.3,1057.00) scale(0.980,1)" x="0" y="0" font-family="'Liberation Sans', sans-serif" font-weight="bold" font-size="43.17" fill="#0606d8" text-anchor="middle">?</text>
<path d="M1376.0,1040.0 L1387.5,1046.6 L1399.0,1040.0" fill="none" stroke="#0606d8" stroke-width="6.0" stroke-linecap="round" stroke-linejoin="round"/>
<rect x="1443.5" y="869.5" width="273.5" height="223" fill="#fff" stroke="#747678" stroke-width="1"/>
<path d="M1486.6,934.4 L1649,931 L1652.4,1047 L1494.4,1043Z" fill="#fdfde6"/>
<path d="M1486.6,934.4 L1649,931 L1652.4,1047 L1494.4,1043Z M1520,925 L1663,922 L1665.6,1024.4 L1525.6,1021Z M1486.6,934.4 L1520,925 M1649,931 L1663,922 M1652.4,1047 L1665.6,1024.4 M1494.4,1043 L1525.6,1021" fill="none" stroke="#8a8a84" stroke-width="0.8"/>
<path d="M1520,925 L1663,922" stroke="#0a7a0a" stroke-width="2.6"/>
<path d="M1494.4,1043 L1652.4,1047" stroke="#e81010" stroke-width="2.6"/>
<path d="M1565,932.6 L1589.4,923.2 L1594,1022 L1570,1045.6Z" fill="#a6f2e0" stroke="#101010" stroke-width="1.7" stroke-linejoin="round"/>
<path d="M1486.6,934.4 L1649,931" stroke="#0a0ad2" stroke-width="2.6"/>
<path d="M1579.5,934 L1579.5,966" stroke="#58b0a0" stroke-width="0.8" stroke-dasharray="5 3 1 3"/>
<path d="M1581,980 L1587,977 M1589,975 L1589,980" stroke="#58b0a0" stroke-width="0.9" fill="none"/>
<circle cx="1589.4" cy="923" r="3.3" fill="#0a7a0a"/>
<circle cx="1565" cy="932.6" r="3.5" fill="#0a0ad2"/>
<circle cx="1570.2" cy="1045.8" r="3.6" fill="#f01010"/>
<path d="M1679,938 L1679,908 L1698.5,908 M1682,905.5 L1686,905.5 M1679.5,928 L1680.5,928" fill="none" stroke="#2a2ad8" stroke-width="1"/>
<text x="1699.8" y="913" font-family="'Liberation Sans', sans-serif" font-weight="bold" font-size="17" fill="#2a2ad8">x</text>
<text x="1447" y="1115.8" font-family="'Liberation Sans', sans-serif" font-size="20.5" fill="#000080" stroke="#000080" stroke-width="0.35" letter-spacing="0.72" >3D surface</text>
<path d="M1576,1102 L1576,1131.2 L1605.5,1131.2" fill="none" stroke="#0606d8" stroke-width="2.2"/>
<path d="M1576.5,1130.5 L1597,1111" fill="none" stroke="#0606d8" stroke-width="2.2"/>
<path d="M1573.5,1107 h2.5 M1573.5,1113 h2.5 M1573.5,1119 h2.5 M1573.5,1125 h2.5 M1581,1131 v2.6 M1587,1131 v2.6 M1593,1131 v2.6 M1599,1131 v2.6 M1582.5,1122 l2.2,2.2 M1587,1117.6 l2.2,2.2 M1591.5,1113.2 l2.2,2.2" fill="none" stroke="#0606d8" stroke-width="1"/>
<rect x="1622.5" y="1124.3" width="36.5" height="9" rx="4.5" fill="#a4a4f2" stroke="#8a8aea" stroke-width="1"/>
<path d="M1622.7,1109.2 L1650.5,1103.4 L1658.6,1116 L1633,1124.6Z" fill="#fafaff" stroke="#3a3ae0" stroke-width="1.1" stroke-linejoin="round"/>
<path d="M1636,1117.2 L1650,1110" stroke="#3a3ae0" stroke-width="1" fill="none"/>
<circle cx="1636.5" cy="1117" r="1.5" fill="#3a3ae0"/><circle cx="1649.5" cy="1110.2" r="1.5" fill="#3a3ae0"/>
<circle cx="1644.8" cy="1128.8" r="6.6" fill="#0606d8"/>
<path d="M1674.5,1108 L1680.5,1102 L1705.5,1102 L1705.5,1125 L1699.5,1132.5 L1674.5,1132.5Z M1674.5,1108 L1699.5,1108 L1705.5,1102 M1680.5,1102 L1680.5,1125.5 L1674.5,1132.5 M1680.5,1125.5 L1705.5,1125 M1699.5,1108 L1699.5,1132.5" fill="none" stroke="#3a3ae0" stroke-width="1"/>
<path d="M1700,1108.5 L1700,1132" stroke="#0808a0" stroke-width="2.8"/>
</svg>
</body></html>
